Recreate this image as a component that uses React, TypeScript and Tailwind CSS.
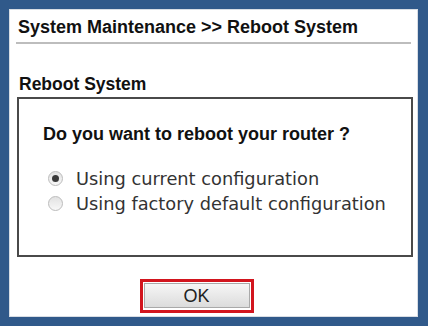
import React, { useState } from 'react';

const options = [
    { id: 'current', label: 'Using current configuration' },
    { id: 'factory', label: 'Using factory default configuration' },
];

const Radio: React.FC<{ checked: boolean }> = ({ checked }) => (
    <span className="flex h-[15px] w-[15px] shrink-0 items-center justify-center rounded-full border border-[#bcbcbc] bg-gradient-to-b from-[#e2e2e2] to-[#f8f8f8]">
        {checked && <span className="h-[7px] w-[7px] rounded-full bg-[#3a3a3a]" />}
    </span>
);

export default function App() {
    const [mode, setMode] = useState('current');

    return (
        <div className="h-[326px] w-[428px] bg-[#30598a] px-[9px] pt-[9px]">
            <div className="flex h-[308px] w-[409px] flex-col border border-[#d8dde4] bg-white font-['Liberation_Sans',Arial,sans-serif] text-[#111]">
                <div className="flex h-[32px] items-center pl-[8px] pt-[1px] text-[18px] font-bold leading-none">
                    System Maintenance &gt;&gt; Reboot System
                </div>
                <div className="mx-[6px] h-[2px] bg-[#bdbdbd]" />

                <div className="flex h-[53px] items-end pb-[4px] pl-[9px] text-[17.5px] font-bold leading-none">
                    Reboot System
                </div>

                <div className="ml-[7px] h-[160px] w-[396px] border-2 border-[#4a4a4a]">
                    <div className="flex h-[62px] items-center pl-[24px] pt-[8px] text-[18px] font-bold leading-none">
                        Do you want to reboot your router ?
                    </div>
                    <div className="flex flex-col pt-[5px] pl-[29px] font-['DejaVu_Sans',Verdana,sans-serif] text-[17.8px] text-[#333]">
                        {options.map((o) => (
                            <label key={o.id} className="flex h-[25px] cursor-pointer items-center gap-[13px]" onClick={() => setMode(o.id)}>
                                <Radio checked={mode === o.id} />
                                <span className="leading-none">{o.label}</span>
                            </label>
                        ))}
                    </div>
                </div>

                <div className="flex justify-center pt-[22px] pr-[34px]">
                    <div className="border-[3px] border-[#d2151e] p-px">
                        <button className="h-[25px] w-[106px] border border-[#a9a9a9] bg-gradient-to-b from-[#f6f6f6] to-[#dcdcdc] text-[18px] leading-none text-[#222]">
                            OK
                        </button>
                    </div>
                </div>
            </div>
        </div>
    );
}
